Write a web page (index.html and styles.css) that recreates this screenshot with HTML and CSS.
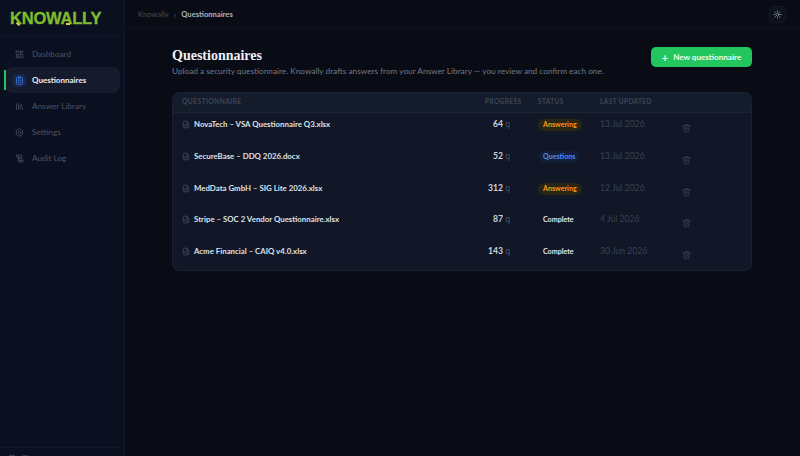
FILE: index.html
```html
<!DOCTYPE html>
<html lang="en">
<head>
  <meta charset="UTF-8">
  <title>Questionnaires – Knowally</title>
  <meta name="viewport" content="width=device-width, initial-scale=1.0">
  <link rel="stylesheet" href="styles.css">
</head>
<body>

<div class="app">
  <aside class="sidebar">
    <div class="brand">
      <span class="logo">KNOWALLY<i class="spark spark-k"></i><i class="spark spark-a"></i></span>
    </div>
    <nav class="nav">
      <a class="nav-item">
        <span class="nav-icon"><svg viewBox="0 0 24 24"><rect x="3" y="3" width="7.5" height="9" rx="1"/><rect x="13.5" y="3" width="7.5" height="5" rx="1"/><rect x="13.5" y="12" width="7.5" height="9" rx="1"/><rect x="3" y="16" width="7.5" height="5" rx="1"/></svg></span>
        Dashboard
      </a>
      <a class="nav-item active">
        <span class="nav-icon"><svg viewBox="0 0 24 24"><rect x="8" y="2" width="8" height="4" rx="1"/><path d="M16 4h2a2 2 0 0 1 2 2v14a2 2 0 0 1-2 2H6a2 2 0 0 1-2-2V6a2 2 0 0 1 2-2h2"/><path d="M8 11h8M8 16h8"/></svg></span>
        Questionnaires
      </a>
      <a class="nav-item">
        <span class="nav-icon"><svg viewBox="0 0 24 24"><path d="M4 5v15M9 5v15M13.5 9v11M16 6l5 14"/></svg></span>
        Answer Library
      </a>
      <a class="nav-item">
        <span class="nav-icon"><svg viewBox="0 0 24 24"><path d="M12 2l8.5 5v10L12 22l-8.5-5V7z"/><circle cx="12" cy="12" r="3.5"/></svg></span>
        Settings
      </a>
      <a class="nav-item">
        <span class="nav-icon"><svg viewBox="0 0 24 24"><path d="M3 3h13a2 2 0 0 1 2 2v12"/><path d="M3 3a2 2 0 0 1 2 2v3h4"/><path d="M9 8v11a2 2 0 0 0 2 2h9a2 2 0 0 0 2-2v-2H12v2"/><path d="M9 8h5M9 12h5"/></svg></span>
        Audit Log
      </a>
    </nav>
    <div class="sidebar-foot">
      <svg viewBox="0 0 24 24"><rect x="4" y="4" width="16" height="16" rx="2"/></svg>
      Sign out
    </div>
  </aside>

  <div class="content">
    <header class="topbar">
      <div class="crumbs">
        <span>Knowally</span>
        <span class="crumb-sep">›</span>
        <span class="crumb-now">Questionnaires</span>
      </div>
      <button class="theme-btn">
        <svg viewBox="0 0 24 24"><circle cx="12" cy="12" r="4"/><path d="M12 2v3M12 19v3M2 12h3M19 12h3M5 5l2 2M17 17l2 2M5 19l2-2M17 7l2-2"/></svg>
      </button>
    </header>

    <main class="main">
      <div class="page-head">
        <div>
          <h1>Questionnaires</h1>
          <p>Upload a security questionnaire. Knowally drafts answers from your Answer Library — you review and confirm each one.</p>
        </div>
        <button class="new-btn"><span class="plus">+</span> New questionnaire</button>
      </div>

      <div class="card">
        <div class="row head">
          <div class="col-name">Questionnaire</div>
          <div class="col-progress">Progress</div>
          <div class="col-status">Status</div>
          <div class="col-date">Last updated</div>
          <div class="col-del"></div>
        </div>

        <div class="row">
          <div class="col-name"><svg class="file" viewBox="0 0 24 24"><path d="M14 2H6a2 2 0 0 0-2 2v16a2 2 0 0 0 2 2h12a2 2 0 0 0 2-2V8z"/><path d="M14 2v6h6M8 13h8M8 17h8"/></svg>NovaTech – VSA Questionnaire Q3.xlsx</div>
          <div class="col-progress"><b>64</b> q</div>
          <div class="col-status"><span class="badge answering">Answering</span></div>
          <div class="col-date">13 Jul 2026</div>
          <div class="col-del"><svg class="trash" viewBox="0 0 24 24"><path d="M3 6h18M8 6V4a1 1 0 0 1 1-1h6a1 1 0 0 1 1 1v2M5 6l1 15a1 1 0 0 0 1 1h10a1 1 0 0 0 1-1l1-15M10 11v6M14 11v6"/></svg></div>
        </div>
        <div class="row">
          <div class="col-name"><svg class="file" viewBox="0 0 24 24"><path d="M14 2H6a2 2 0 0 0-2 2v16a2 2 0 0 0 2 2h12a2 2 0 0 0 2-2V8z"/><path d="M14 2v6h6M8 13h8M8 17h8"/></svg>SecureBase – DDQ 2026.docx</div>
          <div class="col-progress"><b>52</b> q</div>
          <div class="col-status"><span class="badge questions">Questions</span></div>
          <div class="col-date">13 Jul 2026</div>
          <div class="col-del"><svg class="trash" viewBox="0 0 24 24"><path d="M3 6h18M8 6V4a1 1 0 0 1 1-1h6a1 1 0 0 1 1 1v2M5 6l1 15a1 1 0 0 0 1 1h10a1 1 0 0 0 1-1l1-15M10 11v6M14 11v6"/></svg></div>
        </div>
        <div class="row">
          <div class="col-name"><svg class="file" viewBox="0 0 24 24"><path d="M14 2H6a2 2 0 0 0-2 2v16a2 2 0 0 0 2 2h12a2 2 0 0 0 2-2V8z"/><path d="M14 2v6h6M8 13h8M8 17h8"/></svg>MedData GmbH – SIG Lite 2026.xlsx</div>
          <div class="col-progress"><b>312</b> q</div>
          <div class="col-status"><span class="badge answering">Answering</span></div>
          <div class="col-date">12 Jul 2026</div>
          <div class="col-del"><svg class="trash" viewBox="0 0 24 24"><path d="M3 6h18M8 6V4a1 1 0 0 1 1-1h6a1 1 0 0 1 1 1v2M5 6l1 15a1 1 0 0 0 1 1h10a1 1 0 0 0 1-1l1-15M10 11v6M14 11v6"/></svg></div>
        </div>
        <div class="row">
          <div class="col-name"><svg class="file" viewBox="0 0 24 24"><path d="M14 2H6a2 2 0 0 0-2 2v16a2 2 0 0 0 2 2h12a2 2 0 0 0 2-2V8z"/><path d="M14 2v6h6M8 13h8M8 17h8"/></svg>Stripe – SOC 2 Vendor Questionnaire.xlsx</div>
          <div class="col-progress"><b>87</b> q</div>
          <div class="col-status"><span class="badge complete">Complete</span></div>
          <div class="col-date">4 Jul 2026</div>
          <div class="col-del"><svg class="trash" viewBox="0 0 24 24"><path d="M3 6h18M8 6V4a1 1 0 0 1 1-1h6a1 1 0 0 1 1 1v2M5 6l1 15a1 1 0 0 0 1 1h10a1 1 0 0 0 1-1l1-15M10 11v6M14 11v6"/></svg></div>
        </div>
        <div class="row">
          <div class="col-name"><svg class="file" viewBox="0 0 24 24"><path d="M14 2H6a2 2 0 0 0-2 2v16a2 2 0 0 0 2 2h12a2 2 0 0 0 2-2V8z"/><path d="M14 2v6h6M8 13h8M8 17h8"/></svg>Acme Financial – CAIQ v4.0.xlsx</div>
          <div class="col-progress"><b>143</b> q</div>
          <div class="col-status"><span class="badge complete">Complete</span></div>
          <div class="col-date">30 Jun 2026</div>
          <div class="col-del"><svg class="trash" viewBox="0 0 24 24"><path d="M3 6h18M8 6V4a1 1 0 0 1 1-1h6a1 1 0 0 1 1 1v2M5 6l1 15a1 1 0 0 0 1 1h10a1 1 0 0 0 1-1l1-15M10 11v6M14 11v6"/></svg></div>
        </div>
      </div>
    </main>
  </div>
</div>

</body>
</html>
```

FILE: styles.css
```css
* { box-sizing: border-box; }
html, body { height: 100%; }
body {
  margin: 0;
  background: #090c14;
  font-family: Lato, "Noto Sans", sans-serif;
  color: #e6e9ef;
  overflow: hidden;
}
svg {
  fill: none;
  stroke: currentColor;
  stroke-width: 2;
  stroke-linecap: round;
  stroke-linejoin: round;
}
.app {
  display: flex;
  height: 456px;
  overflow: hidden;
}

/* sidebar */
.sidebar {
  width: 125px;
  flex: none;
  height: 468px;
  display: flex;
  flex-direction: column;
  background: #0b1020;
  border-right: 1px solid #121829;
}
.brand {
  height: 36px;
  flex: none;
  padding: 8px 0 0 10px;
  border-bottom: 1px solid #111728;
}
.logo {
  position: relative;
  display: inline-block;
  font-family: "Liberation Sans", Arial, sans-serif;
  font-weight: 700;
  font-size: 16.5px;
  line-height: 19px;
  letter-spacing: -0.2px;
  color: #7fbb2e;
  -webkit-text-stroke: 0.3px #7fbb2e;
}
.spark {
  position: absolute;
  width: 4px;
  height: 2px;
  background: #e4cf3d;
}
.spark-k { left: 6px; top: 14px; transform: rotate(40deg); }
.spark-a { left: 56px; top: 14px; }
.nav {
  flex: 1;
  display: flex;
  flex-direction: column;
  padding: 5px 0 0 5px;
}
.nav-item {
  position: relative;
  display: flex;
  align-items: center;
  gap: 6px;
  height: 26px;
  width: 115px;
  padding-left: 8px;
  font-size: 8.2px;
  line-height: 11px;
  color: #4b5366;
}
.nav-icon {
  width: 13px;
  height: 13px;
  display: flex;
  align-items: center;
  justify-content: center;
  flex: none;
}
.nav-icon svg { width: 9px; height: 9px; }
.nav-item.active {
  color: #e9ecf2;
  font-weight: 700;
  font-size: 8px;
  background: #151b2d;
  border-radius: 8px;
}
.nav-item.active::before {
  content: "";
  position: absolute;
  left: -1px;
  top: 3px;
  bottom: 3px;
  width: 2px;
  background: #22c55e;
}
.nav-item.active .nav-icon {
  color: #3b82f6;
  background: #17264a;
  border-radius: 3px;
}
.sidebar-foot {
  flex: none;
  height: 21px;
  display: flex;
  align-items: center;
  gap: 6px;
  padding-left: 8px;
  font-size: 8px;
  color: #4b5366;
  border-top: 1px solid #121829;
}
.sidebar-foot svg { width: 8px; height: 8px; }

/* top bar */
.content {
  flex: 1;
  min-width: 0;
  display: flex;
  flex-direction: column;
}
.topbar {
  height: 29px;
  flex: none;
  display: flex;
  align-items: center;
  justify-content: space-between;
  padding: 0 14px 0 13px;
  border-bottom: 1px solid #0f1320;
  font-size: 7.6px;
  color: #454c5d;
}
.crumbs { display: flex; gap: 5px; align-items: center; }
.crumb-sep { font-size: 9px; }
.crumb-now { color: #aeb4c0; font-weight: 700; }
.theme-btn {
  width: 17px;
  height: 17px;
  padding: 0;
  display: flex;
  align-items: center;
  justify-content: center;
  color: #8f96a5;
  background: #0d111c;
  border: 1px solid #151a27;
  border-radius: 4px;
}
.theme-btn svg { width: 9px; height: 9px; }

/* page */
.main {
  flex: 1;
  padding: 18px 48px 0 47px;
}
.page-head {
  display: flex;
  justify-content: space-between;
  align-items: flex-start;
  height: 45px;
}
h1 {
  margin: 0;
  font-family: "Liberation Serif", serif;
  font-size: 14px;
  line-height: 18px;
  font-weight: 700;
  color: #eef0f4;
}
.page-head p {
  margin: 0;
  font-size: 8.25px;
  line-height: 12px;
  color: #717887;
}
.new-btn {
  width: 101px;
  height: 20px;
  display: flex;
  align-items: center;
  justify-content: center;
  gap: 5px;
  padding: 0;
  border: 0;
  border-radius: 5px;
  background: #22c55e;
  color: #eafff1;
  font-family: inherit;
  font-size: 8.1px;
  font-weight: 700;
}
.plus { font-size: 11px; line-height: 1; }

/* table */
.card {
  height: 179px;
  background: #111726;
  border: 1px solid #1a2132;
  border-radius: 7px;
  overflow: hidden;
}
.row {
  display: flex;
  height: 31.75px;
  padding-top: 6px;
  font-size: 8.6px;
}
.row.head {
  height: 20px;
  padding: 0 0 3px;
  align-items: center;
  background: #141c2c;
  border-bottom: 1px solid #1c2436;
  font-size: 6.5px;
  font-weight: 700;
  letter-spacing: 0.4px;
  text-transform: uppercase;
  color: #3e4759;
}
.col-name {
  width: 300px;
  padding-left: 9px;
  display: flex;
  gap: 4px;
  align-items: flex-start;
  font-size: 7.85px;
  line-height: 11px;
  font-weight: 700;
  color: #dde1e8;
}
.head .col-name { color: #3e4759; font-size: 6.7px; }
.col-progress {
  width: 53px;
  text-align: right;
  padding-right: 16px;
  line-height: 11px;
  color: #49536a;
}
.col-progress b { color: #cfd3db; font-weight: 700; }
.head .col-progress { text-align: left; padding: 0 0 0 12px; color: #3e4759; }
.col-status { width: 74px; padding-left: 12px; }
.col-date { width: 82px; line-height: 11px; color: #3a4254; }
.head .col-date { color: #3e4759; }
.col-del { flex: 1; }
.file {
  width: 8px;
  height: 9px;
  margin-top: 1px;
  flex: none;
  color: #4a5264;
}
.trash {
  display: block;
  width: 9px;
  height: 10px;
  margin-top: 4px;
  color: #3f4759;
}
.badge {
  display: inline-block;
  padding: 1px 5px;
  font-size: 7.1px;
  line-height: 10px;
  font-weight: 700;
  border-radius: 6px;
}
.answering { color: #f59e0b; background: #2a2415; }
.questions { color: #4f8ff7; background: #121d36; }
.complete { color: #e3e6ea; }
```
